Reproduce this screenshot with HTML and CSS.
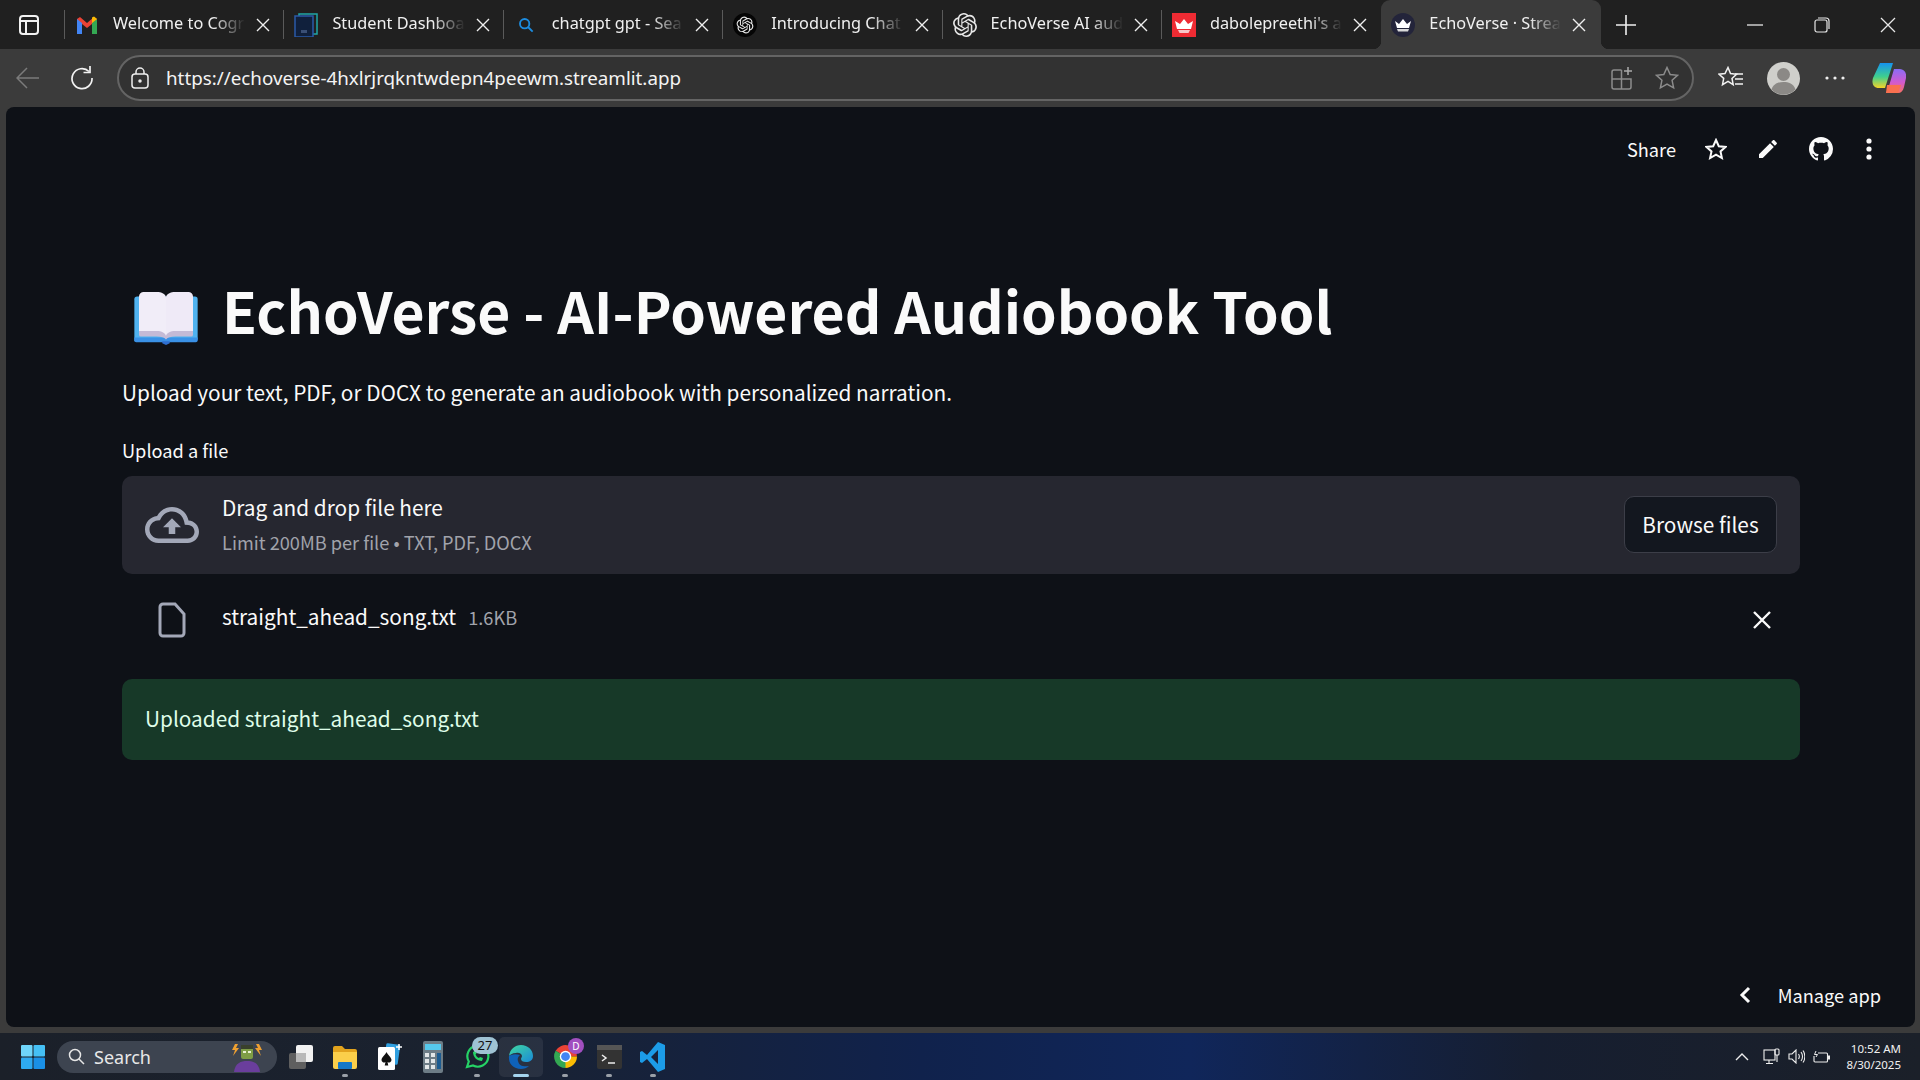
FILE: index.html
```html
<!DOCTYPE html>
<html lang="en">
<head>
    <meta charset="UTF-8">
    <title>EchoVerse · Streamlit</title>
    <link rel="stylesheet" href="styles.css">
</head>
<body>
    <div class="screen">
        <!-- Tabs -->
        <div class="tabstrip">
            <div class="tab-menu">
                <svg width="22" height="24" viewBox="0 0 22 24" fill="none" stroke="#f2f2f2" stroke-width="2"><rect x="2" y="3" width="18" height="18" rx="3"/><path d="M2 8h18M8 8v13"/></svg>
            </div>
            <div class="tab-sep"></div>
            <div class="tab">
                <svg class="favicon" viewBox="0 0 24 24"><path d="M2 21V6l3 -2 7 6 7-6 3 2v15h-5V11l-5 4-5-4v10z" fill="#ea4335"/><path d="M2 21V6l5 4v11z" fill="#4285f4"/><path d="M22 21V6l-5 4v11z" fill="#34a853"/><path d="M17 10V4.500l2-.9 3 2.400v0z" fill="#fbbc04"/></svg>
                <span class="tab-label">Welcome to Cogr</span>
                <svg class="tab-close" viewBox="0 0 14 14"><path d="M1 1l12 12M13 1L1 13"/></svg>
            </div>
            <div class="tab-sep"></div>
            <div class="tab">
                <svg class="favicon" viewBox="0 0 24 24" fill="none"><rect x="5" y="1" width="18" height="20" stroke="#1fa6a6" stroke-width="1.500"/><rect x="1" y="3" width="18" height="21" fill="#10203c" stroke="#2a5aa8" stroke-width="1.500"/><path d="M7 17h6v3H7z" fill="#3a4f75"/></svg>
                <span class="tab-label">Student Dashboa</span>
                <svg class="tab-close" viewBox="0 0 14 14"><path d="M1 1l12 12M13 1L1 13"/></svg>
            </div>
            <div class="tab-sep"></div>
            <div class="tab">
                <svg class="favicon favicon-small" viewBox="0 0 24 24" fill="none" stroke="#1c8ce0" stroke-width="2.800"><circle cx="10" cy="10" r="7"/><path d="M15 15l7 7"/></svg>
                <span class="tab-label">chatgpt gpt - Sea</span>
                <svg class="tab-close" viewBox="0 0 14 14"><path d="M1 1l12 12M13 1L1 13"/></svg>
            </div>
            <div class="tab-sep"></div>
            <div class="tab">
                <svg class="favicon" viewBox="0 0 24 24"><circle cx="12" cy="12" r="12" fill="#050505"/><path transform="translate(3.600 3.600) scale(.7)" fill="#e8e8e8" d="M22.2819 9.8211a5.9847 5.9847 0 0 0-.5157-4.9108 6.0462 6.0462 0 0 0-6.5098-2.9A6.0651 6.0651 0 0 0 4.9807 4.1818a5.9847 5.9847 0 0 0-3.9977 2.9 6.0462 6.0462 0 0 0 .7427 7.0966 5.98 5.98 0 0 0 .511 4.9107 6.051 6.051 0 0 0 6.5146 2.9001A5.9847 5.9847 0 0 0 13.2599 24a6.0557 6.0557 0 0 0 5.7718-4.2058 5.9894 5.9894 0 0 0 3.9977-2.9001 6.0557 6.0557 0 0 0-.7475-7.0729zm-9.022 12.6081a4.4755 4.4755 0 0 1-2.8764-1.0408l.1419-.0804 4.7783-2.7582a.7948.7948 0 0 0 .3927-.6813v-6.7369l2.02 1.1686a.071.071 0 0 1 .038.052v5.5826a4.504 4.504 0 0 1-4.4945 4.4944zm-9.6607-4.1254a4.4708 4.4708 0 0 1-.5346-3.0137l.142.0852 4.783 2.7582a.7712.7712 0 0 0 .7806 0l5.8428-3.3685v2.3324a.0804.0804 0 0 1-.0332.0615L9.74 19.9502a4.4992 4.4992 0 0 1-6.1408-1.6464zM2.3408 7.8956a4.485 4.485 0 0 1 2.3655-1.9728V11.6a.7664.7664 0 0 0 .3879.6765l5.8144 3.3543-2.0201 1.1685a.0757.0757 0 0 1-.071 0l-4.8303-2.7865A4.504 4.504 0 0 1 2.3408 7.872zm16.5963 3.8558L13.1038 8.364 15.1192 7.2a.0757.0757 0 0 1 .071 0l4.8303 2.7913a4.4944 4.4944 0 0 1-.6765 8.1042v-5.6772a.79.79 0 0 0-.407-.667zm2.0107-3.0231l-.142-.0852-4.7735-2.7818a.7759.7759 0 0 0-.7854 0L9.409 9.2297V6.8974a.0662.0662 0 0 1 .0284-.0615l4.8303-2.7866a4.4992 4.4992 0 0 1 6.6802 4.66zM8.3065 12.863l-2.02-1.1638a.0804.0804 0 0 1-.038-.0567V6.0742a4.4992 4.4992 0 0 1 7.3757-3.4537l-.142.0805L8.704 5.459a.7948.7948 0 0 0-.3927.6813zm1.0976-2.3654l2.602-1.4998 2.6069 1.4998v2.9994l-2.5974 1.4997-2.6067-1.4997Z"/></svg>
                <span class="tab-label">Introducing Chat</span>
                <svg class="tab-close" viewBox="0 0 14 14"><path d="M1 1l12 12M13 1L1 13"/></svg>
            </div>
            <div class="tab-sep"></div>
            <div class="tab">
                <svg class="favicon" viewBox="0 0 24 24"><path fill="#e8e8e8" d="M22.2819 9.8211a5.9847 5.9847 0 0 0-.5157-4.9108 6.0462 6.0462 0 0 0-6.5098-2.9A6.0651 6.0651 0 0 0 4.9807 4.1818a5.9847 5.9847 0 0 0-3.9977 2.9 6.0462 6.0462 0 0 0 .7427 7.0966 5.98 5.98 0 0 0 .511 4.9107 6.051 6.051 0 0 0 6.5146 2.9001A5.9847 5.9847 0 0 0 13.2599 24a6.0557 6.0557 0 0 0 5.7718-4.2058 5.9894 5.9894 0 0 0 3.9977-2.9001 6.0557 6.0557 0 0 0-.7475-7.0729zm-9.022 12.6081a4.4755 4.4755 0 0 1-2.8764-1.0408l.1419-.0804 4.7783-2.7582a.7948.7948 0 0 0 .3927-.6813v-6.7369l2.02 1.1686a.071.071 0 0 1 .038.052v5.5826a4.504 4.504 0 0 1-4.4945 4.4944zm-9.6607-4.1254a4.4708 4.4708 0 0 1-.5346-3.0137l.142.0852 4.783 2.7582a.7712.7712 0 0 0 .7806 0l5.8428-3.3685v2.3324a.0804.0804 0 0 1-.0332.0615L9.74 19.9502a4.4992 4.4992 0 0 1-6.1408-1.6464zM2.3408 7.8956a4.485 4.485 0 0 1 2.3655-1.9728V11.6a.7664.7664 0 0 0 .3879.6765l5.8144 3.3543-2.0201 1.1685a.0757.0757 0 0 1-.071 0l-4.8303-2.7865A4.504 4.504 0 0 1 2.3408 7.872zm16.5963 3.8558L13.1038 8.364 15.1192 7.2a.0757.0757 0 0 1 .071 0l4.8303 2.7913a4.4944 4.4944 0 0 1-.6765 8.1042v-5.6772a.79.79 0 0 0-.407-.667zm2.0107-3.0231l-.142-.0852-4.7735-2.7818a.7759.7759 0 0 0-.7854 0L9.409 9.2297V6.8974a.0662.0662 0 0 1 .0284-.0615l4.8303-2.7866a4.4992 4.4992 0 0 1 6.6802 4.66zM8.3065 12.863l-2.02-1.1638a.0804.0804 0 0 1-.038-.0567V6.0742a4.4992 4.4992 0 0 1 7.3757-3.4537l-.142.0805L8.704 5.459a.7948.7948 0 0 0-.3927.6813zm1.0976-2.3654l2.602-1.4998 2.6069 1.4998v2.9994l-2.5974 1.4997-2.6067-1.4997Z"/></svg>
                <span class="tab-label">EchoVerse AI aud</span>
                <svg class="tab-close" viewBox="0 0 14 14"><path d="M1 1l12 12M13 1L1 13"/></svg>
            </div>
            <div class="tab-sep"></div>
            <div class="tab">
                <svg class="favicon" viewBox="0 0 24 24"><rect width="24" height="24" fill="#ee2b33"/><path d="M3 8l5 3 4-5 4 5 5-3-2 8H5z" fill="#fff"/><path d="M6 17h12l-1.500 3h-9z" fill="#f8c6c8"/></svg>
                <span class="tab-label">dabolepreethi's a</span>
                <svg class="tab-close" viewBox="0 0 14 14"><path d="M1 1l12 12M13 1L1 13"/></svg>
            </div>
            <div class="tab tab-active">
                <svg class="favicon" viewBox="0 0 24 24"><circle cx="12" cy="12" r="12" fill="#23243a"/><path d="M4 8l4 3 4-5 4 5 4-3-2 7H6z" fill="#fff"/><path d="M6 16h12l-1 2.500H7z" fill="#d9d9d9"/></svg>
                <span class="tab-label">EchoVerse · Strea</span>
                <svg class="tab-close" viewBox="0 0 14 14"><path d="M1 1l12 12M13 1L1 13"/></svg>
            </div>
            <svg class="new-tab" width="20" height="20" viewBox="0 0 20 20" stroke="#f0f0f0" stroke-width="1.600"><path d="M10 0v20M0 10h20"/></svg>
            <div class="window-buttons">
                <div class="window-button"><svg width="16" height="16" viewBox="0 0 16 16" stroke="#e8e8e8" stroke-width="1.300"><path d="M0 8h16"/></svg></div>
                <div class="window-button"><svg width="16" height="16" viewBox="0 0 16 16" fill="none" stroke="#e8e8e8" stroke-width="1.200"><rect x="1" y="3" width="12" height="12" rx="2"/><path d="M4 1h8a3 3 0 0 1 3 3v8"/></svg></div>
                <div class="window-button"><svg width="16" height="16" viewBox="0 0 16 16" stroke="#e8e8e8" stroke-width="1.300"><path d="M1 1l14 14M15 1L1 15"/></svg></div>
            </div>
        </div>

        <!-- Address bar -->
        <div class="toolbar">
            <div class="tool-button">
                <svg width="24" height="22" viewBox="0 0 24 22" fill="none" stroke="#7b7b7b" stroke-width="1.500"><path d="M23 11H1M11 1L1 11l10 10"/></svg>
            </div>
            <div class="tool-button">
                <svg width="24" height="24" viewBox="0 0 24 24" fill="none" stroke="#f2f2f2" stroke-width="1.700"><path d="M19 5.500A10 10 0 1 0 22 12"/><path d="M20 0v6.500h-6.500"/></svg>
            </div>
            <div class="address">
                <svg class="lock" width="18" height="22" viewBox="0 0 18 22" fill="none" stroke="#eee" stroke-width="1.500"><rect x="1" y="7" width="16" height="14" rx="3"/><path d="M5 7V5a4 4 0 0 1 8 0v2"/><circle cx="9" cy="14" r="1" fill="#eee"/></svg>
                <span class="url">https://echoverse-4hxlrjrqkntwdepn4peewm.streamlit.app</span>
                <svg class="address-icon" width="22" height="24" viewBox="0 0 22 24" fill="none" stroke="#8c8c8c" stroke-width="1.500"><path d="M10.500 4H3a2 2 0 0 0-2 2v15a2 2 0 0 0 2 2h15a2 2 0 0 0 2-2v-8H1M10.500 4v19"/><path d="M17 1v8M13 5h8" stroke="#aaa"/></svg>
                <svg class="address-icon" width="24" height="24" viewBox="0 0 24 24" fill="none" stroke="#8c8c8c" stroke-width="1.500"><path d="M12 1.500l3.200 7 7.300.8-5.400 5 1.500 7.600-6.600-3.800-6.600 3.800L6.900 14.300l-5.400-5 7.300-.8z"/></svg>
            </div>
            <div class="tool-right">
                <div class="tool-cell">
                    <svg width="26" height="24" viewBox="0 0 26 24" fill="none" stroke="#f2f2f2" stroke-width="1.500"><path d="M10 1.500l2.500 6 6 .7-4.500 4.200 1.200 6.300L10 15.400l-5.500 3.300 1.200-6.300L1 8.200l6-.7z"/><path d="M17 8h8M17 13h8M17 18h8"/></svg>
                </div>
                <div class="tool-cell">
                    <svg width="33" height="33" viewBox="0 0 33 33"><circle cx="16.500" cy="16.500" r="16.500" fill="#cfcfcb"/><circle cx="16.500" cy="12.500" r="6.500" fill="#8b8986"/><path d="M4.500 27.500c2-6 7-7.500 12-7.500s10 1.500 12 7.500a16.500 16.500 0 0 1-24 0z" fill="#8b8986"/></svg>
                </div>
                <div class="tool-cell">
                    <svg width="20" height="4" viewBox="0 0 20 4" fill="#eee"><circle cx="2" cy="2" r="1.600"/><circle cx="10" cy="2" r="1.600"/><circle cx="18" cy="2" r="1.600"/></svg>
                </div>
                <div class="tool-cell">
                    <svg width="34" height="32" viewBox="0 0 34 32"><defs><linearGradient id="copA" x1="0" y1="0" x2="0" y2="1"><stop offset="0" stop-color="#1593f0"/><stop offset=".55" stop-color="#3fcf8e"/><stop offset="1" stop-color="#f5d327"/></linearGradient><linearGradient id="copB" x1="0" y1="0" x2="0" y2="1"><stop offset="0" stop-color="#8a6cf5"/><stop offset=".55" stop-color="#d05ad0"/><stop offset="1" stop-color="#f97060"/></linearGradient></defs><path d="M8 1h13l-8 25H7C1 26-.5 21 1 16z" fill="url(#copA)"/><path d="M14 31h12c3 0 5-2 6-6l2-9c1-5-2-9-6-9h-6l-5 17z" fill="url(#copB)"/><path d="M14 31h12l3-8-14 0z" fill="#f9704f"/></svg>
                </div>
            </div>
        </div>

        <!-- Page -->
        <div class="frame">
            <div class="app">
                <div class="app-header">
                    <span class="share">Share</span>
                    <svg class="header-icon" width="22" height="22" viewBox="0 0 22 22" fill="none" stroke="#fafafa" stroke-width="2"><path d="M11 2l2.800 6.200 6.700.7-5 4.500 1.400 6.600L11 16.600 5.100 20l1.400-6.600-5-4.500 6.700-.7z"/></svg>
                    <svg class="header-icon" width="24" height="24" viewBox="0 0 24 24" fill="#fafafa"><path d="M3 17.250V21h3.750L17.810 9.940l-3.750-3.750L3 17.250zM20.710 7.040c.39-.39.39-1.020 0-1.410l-2.340-2.340c-.39-.39-1.020-.39-1.410 0l-1.830 1.830 3.750 3.750 1.830-1.830z"/></svg>
                    <svg class="header-icon" width="24" height="24" viewBox="0 0 16 16" fill="#fafafa"><path d="M8 0C3.580 0 0 3.580 0 8c0 3.540 2.290 6.530 5.470 7.590.4.070.55-.17.55-.38 0-.19-.01-.82-.01-1.490-2.010.37-2.530-.49-2.690-.94-.09-.23-.48-.94-.82-1.130-.28-.15-.68-.52-.01-.53.63-.01 1.080.58 1.230.82.720 1.210 1.870.87 2.330.66.070-.52.280-.87.510-1.070-1.780-.2-3.640-.89-3.640-3.950 0-.87.310-1.590.820-2.150-.08-.2-.36-1.020.080-2.120 0 0 .670-.21 2.200.82.640-.18 1.320-.27 2-.27.680 0 1.360.090 2 .27 1.530-1.040 2.200-.82 2.200-.82.440 1.100.160 1.920.080 2.120.510.560.820 1.270.820 2.150 0 3.070-1.870 3.750-3.650 3.950.290.250.540.730.540 1.480 0 1.070-.01 1.930-.01 2.200 0 .210.150.460.550.380A8.013 8.013 0 0016 8c0-4.420-3.580-8-8-8z"/></svg>
                    <svg class="header-dots" width="6" height="22" viewBox="0 0 6 22" fill="#fafafa"><circle cx="3" cy="3" r="2.600"/><circle cx="3" cy="11" r="2.600"/><circle cx="3" cy="19" r="2.600"/></svg>
                </div>

                <main class="content">
                    <h1 class="title">
                        <svg class="book" width="64" height="54" viewBox="0 0 68 58"><path d="M0 9a3 3 0 0 1 3-3h62a3 3 0 0 1 3 3v42a3 3 0 0 1-3 3H0z" fill="#4fb2ef"/><path d="M0 50h68v3a2 2 0 0 1-2 2H2a2 2 0 0 1-2-2z" fill="#3a91e6"/><path d="M30 54h8v2l-4 2-4-2z" fill="#2f6fd0"/><path d="M5 6a5 5 0 0 1 5-5h14c5 0 10 2 10 6v43c0-3-5-4-10-4H5z" fill="#f1edf8"/><path d="M63 6a5 5 0 0 0-5-5H44c-5 0-10 2-10 6v43c0-3 5-4 10-4h19z" fill="#efeaf7"/><path d="M5 43h19c5 0 10 2 10 6 0-4 5-6 10-6h19v4a2 2 0 0 1-2 2H44c-5 0-8 1-10 3-2-2-5-3-10-3H7a2 2 0 0 1-2-2z" fill="#c4bad6"/></svg>
                        <span>EchoVerse - AI-Powered Audiobook Tool</span>
                    </h1>
                    <p class="intro">Upload your text, PDF, or DOCX to generate an audiobook with personalized narration.</p>
                    <label class="upload-label">Upload a file</label>

                    <div class="dropzone">
                        <svg class="cloud" width="54" height="54" viewBox="0 0 24 24" fill="#a3a8b8"><path d="M19.350 10.040C18.670 6.590 15.640 4 12 4 9.110 4 6.600 5.640 5.350 8.040 2.340 8.360 0 10.910 0 14c0 3.310 2.690 6 6 6h13c2.760 0 5-2.240 5-5 0-2.640-2.050-4.780-4.650-4.960zM19 18H6c-2.210 0-4-1.790-4-4 0-2.050 1.530-3.760 3.560-3.970l1.070-.11.5-.95C8.080 7.140 9.940 6 12 6c2.620 0 4.880 1.860 5.390 4.430l.3 1.500 1.530.11c1.560.1 2.780 1.410 2.780 2.960 0 1.650-1.350 3-3 3zM8 13h2.550v3h2.900v-3H16l-4-4z"/></svg>
                        <div class="drop-text">
                            <div class="drop-title">Drag and drop file here</div>
                            <div class="drop-limit">Limit 200MB per file • TXT, PDF, DOCX</div>
                        </div>
                        <button class="browse" type="button">Browse files</button>
                    </div>

                    <div class="file-row">
                        <svg class="file-icon" width="30" height="36" viewBox="0 0 30 36" fill="none" stroke="#a3a8b8" stroke-width="3"><path d="M3 5a3 3 0 0 1 3-3h12l9 10v19a3 3 0 0 1-3 3H6a3 3 0 0 1-3-3z"/></svg>
                        <span class="file-name">straight_ahead_song.txt</span>
                        <span class="file-size">1.6KB</span>
                        <svg class="file-remove" width="18" height="18" viewBox="0 0 18 18" stroke="#fafafa" stroke-width="2.400"><path d="M1 1l16 16M17 1L1 17"/></svg>
                    </div>

                    <div class="success">Uploaded straight_ahead_song.txt</div>
                </main>

                <div class="manage">
                    <svg width="12" height="18" viewBox="0 0 12 18" fill="none" stroke="#fafafa" stroke-width="3"><path d="M10 2L3 9l7 7"/></svg>
                    <span>Manage app</span>
                </div>
            </div>
        </div>

        <!-- Taskbar -->
        <div class="taskbar">
            <div class="start">
                <svg width="24" height="24" viewBox="0 0 24 24"><rect width="11.500" height="11.500" rx="1" fill="#6fd5fa"/><rect x="12.500" width="11.500" height="11.500" rx="1" fill="#45c0f5"/><rect y="12.500" width="11.500" height="11.500" rx="1" fill="#2eaaf0"/><rect x="12.500" y="12.500" width="11.500" height="11.500" rx="1" fill="#1a90e6"/></svg>
            </div>
            <div class="search">
                <svg width="17" height="17" viewBox="0 0 17 17" fill="none" stroke="#e6e6e6" stroke-width="1.500"><circle cx="7" cy="7" r="5.500"/><path d="M11 11l5 5"/></svg>
                <span>Search</span>
                <svg class="mascot" width="38" height="30" viewBox="0 0 38 30"><path d="M7 2l-3 6 3 0-2 6 6-8-3 0 2-4zM31 2l3 6-3 0 2 6-6-8 3 0-2-4z" fill="#f0a030"/><rect x="13" y="3" width="12" height="14" rx="2" fill="#7e9d45"/><rect x="13" y="3" width="12" height="4" fill="#39402c"/><rect x="15" y="9" width="3" height="2" fill="#e8f0d0"/><rect x="20" y="9" width="3" height="2" fill="#e8f0d0"/><path d="M6 30c1-9 7-11 13-11s12 2 13 11z" fill="#6a3e9c"/></svg>
            </div>
            <div class="task-icons">
                <div class="task-icon">
                    <svg width="26" height="26" viewBox="0 0 26 26"><rect x="8" y="1" width="17" height="17" rx="2" fill="#f2f2f2"/><rect x="1" y="9" width="17" height="16" rx="2" fill="#5f5f5f"/><rect x="8" y="9" width="10" height="9" fill="#b9b9b9"/></svg>
                </div>
                <div class="task-icon running">
                    <svg width="26" height="26" viewBox="0 0 26 26"><path d="M1 4a2 2 0 0 1 2-2h7l3 3h10a2 2 0 0 1 2 2v3H1z" fill="#e2a31d"/><path d="M1 8h24v15a2 2 0 0 1-2 2H3a2 2 0 0 1-2-2z" fill="#fbcf4a"/><rect x="6" y="18" width="14" height="7" rx="1" fill="#1478c8"/></svg>
                </div>
                <div class="task-icon">
                    <svg width="26" height="28" viewBox="0 0 26 28"><rect x="9" y="1" width="14" height="20" rx="1.500" fill="#2f9fe0" transform="rotate(8 16 11)"/><rect x="2" y="4" width="17" height="23" rx="1.500" fill="#fff"/><path d="M10.500 9c1 3 5 5 5 8a2.500 2.500 0 0 1-4 2l.8 3.500H8.700l.8-3.500a2.500 2.500 0 0 1-4-2c0-3 4-5 5-8z" fill="#111"/><path d="M23 1v6M20 4h6" stroke="#fff" stroke-width="1.500"/></svg>
                </div>
                <div class="task-icon">
                    <svg width="20" height="32" viewBox="0 0 20 32"><rect width="20" height="32" rx="2" fill="#6d7c86"/><rect x="2" y="3" width="16" height="6" fill="#56c8ec"/><path d="M2 12h4v4H2zM8 12h4v4H8zM2 18h4v4H2zM8 18h4v4H8zM2 24h4v4H2zM8 24h4v4H8z" fill="#e2e6e8"/><rect x="14" y="12" width="4" height="16" fill="#1c5b90"/></svg>
                </div>
                <div class="task-icon running">
                    <svg width="26" height="26" viewBox="0 0 26 26" fill="none"><path d="M3 23l1.800-5.500A10.500 10.500 0 1 1 9 21.500z" stroke="#25d366" stroke-width="2.200"/><path d="M9 8c0 5 4 9 9 9l1-3-3-1-1 1c-1.500-.5-3-2-3.500-3.500l1-1-1-3z" fill="#25d366"/></svg>
                    <span class="badge badge-count">27</span>
                </div>
                <div class="task-icon active">
                    <svg width="26" height="26" viewBox="0 0 26 26"><defs><linearGradient id="edgeA" x1="0" y1="0" x2="1" y2="1"><stop offset="0" stop-color="#40d8a0"/><stop offset="1" stop-color="#1a8ad8"/></linearGradient></defs><path d="M1 12C2 5 7 1 13 1c7 0 12 5 12 11 0 4-3 6-7 6-3 0-5-1-5-3 0-1 1-2 1-3 0-2-3-4-6-3-4 0-6 2-7 3z" fill="url(#edgeA)"/><path d="M1 12c-1 8 5 13 12 13 3 0 6-1 8-3-5 1-10 0-11-5-1-3 1-5 2-6-5-2-10 0-11 1z" fill="#0f62b8"/></svg>
                </div>
                <div class="task-icon running">
                    <svg width="25" height="25" viewBox="0 0 24 24"><path d="M12 12L2.500 6.500A11 11 0 0 1 23 12z" fill="#ea4335"/><path d="M12 12l5.500 0L12 23A11 11 0 0 1 2.500 6.500z" fill="#34a853"/><path d="M12 12h11a11 11 0 0 1-11 11z" fill="#fbbc04"/><circle cx="12" cy="12" r="5.500" fill="#fff"/><circle cx="12" cy="12" r="4.200" fill="#4285f4"/></svg>
                    <span class="badge badge-letter">D</span>
                </div>
                <div class="task-icon running">
                    <svg width="25" height="24" viewBox="0 0 25 24"><rect width="25" height="24" rx="2" fill="#333"/><rect width="25" height="5" fill="#555"/><path d="M5 10l4 3-4 3" fill="none" stroke="#eee" stroke-width="1.500"/><path d="M11 18h7" stroke="#eee" stroke-width="1.500"/></svg>
                </div>
                <div class="task-icon running">
                    <svg width="26" height="32" viewBox="0 0 26 32"><path d="M18 1l7 3v24l-7 3-11-13-5 4-2-1V11l2-1 5 4zM18 9l-7 7 7 7z" fill="#1c9ce8"/></svg>
                </div>
            </div>
            <div class="tray">
                <svg width="14" height="8" viewBox="0 0 14 8" fill="none" stroke="#eee" stroke-width="1.400"><path d="M1 7l6-6 6 6"/></svg>
                <svg class="tray-net" width="17" height="17" viewBox="0 0 17 17" fill="none" stroke="#eee" stroke-width="1.100"><rect x="1" y="2" width="11" height="10"/><path d="M6 12v3M3 15.500h7"/><rect x="12" y="1" width="4" height="6" rx="1"/><path d="M14 7v7"/></svg>
                <svg class="tray-sound" width="17" height="15" viewBox="0 0 17 15" fill="none" stroke="#eee" stroke-width="1.100"><path d="M1 5v5h3l4 4V1L4 5z"/><path d="M10.500 5c1 1.500 1 3.500 0 5M13 3c2 2.500 2 6.500 0 9M15 1.500c2.500 3.500 2.500 8.500 0 12"/></svg>
                <svg class="tray-battery" width="17" height="12" viewBox="0 0 17 12" fill="none" stroke="#eee" stroke-width="1.100"><path d="M5 2h8.500a1 1 0 0 1 1 1v7a1 1 0 0 1-1 1H2a1 1 0 0 1-1-1V5"/><path d="M15 5h1.500v3H15" fill="#eee"/><path d="M3 0L1.500 3.500h3L3 6" stroke-width="1"/></svg>
                <div class="clock">
                    <span>10:52 AM</span>
                    <span>8/30/2025</span>
                </div>
            </div>
        </div>
    </div>
</body>
</html>
```

FILE: styles.css
```css
* {
    box-sizing: border-box;
}

html, body {
    margin: 0;
    height: 100%;
    overflow: hidden;
}

body {
    font-family: "Noto Sans", "Open Sans", sans-serif;
    background-color: #202020;
    color: #fafafa;
}

.screen {
    width: 1920px;
    height: 1080px;
    display: flex;
    flex-direction: column;
}

/* Tabs */
.tabstrip {
    height: 49px;
    flex: none;
    display: flex;
    align-items: center;
    background-color: #202020;
}

.tab-menu {
    width: 57px;
    flex: none;
    display: flex;
    justify-content: center;
}

.tab-menu svg {
    display: block;
}

.tab-sep {
    width: 1px;
    height: 29px;
    flex: none;
    background-color: #5a5a5a;
}

.tab-menu + .tab-sep {
    margin-left: 7px;
}

.tab {
    width: 218.4px;
    height: 49px;
    flex: none;
    display: flex;
    align-items: center;
    gap: 14px;
    padding: 0 13px 0 10px;
    font-size: 16.3px;
    color: #f0f0f0;
}

.favicon {
    width: 24px;
    height: 24px;
    flex: none;
}

.favicon-small {
    padding: 4px;
}

.tab-label {
    flex: 1;
    min-width: 0;
    white-space: nowrap;
    line-height: 22px;
    margin-top: -4px;
    -webkit-mask-image: linear-gradient(to right, #000 74%, transparent 98%);
    mask-image: linear-gradient(to right, #000 74%, transparent 98%);
}

.tab-close {
    width: 14px;
    height: 14px;
    flex: none;
    margin-left: -6px;
    fill: none;
    stroke: #f0f0f0;
    stroke-width: 1.4;
}

.tab-active {
    width: 220px;
    margin-left: 1px;
    padding-right: 15px;
    position: relative;
    background-color: #3b3b3b;
    border-radius: 9px 9px 0 0;
}

.tab-active::before,
.tab-active::after {
    content: "";
    position: absolute;
    bottom: 0;
    width: 8px;
    height: 8px;
}

.tab-active::before {
    left: -8px;
    background: radial-gradient(circle at 0 0, transparent 8px, #3b3b3b 8.5px);
}

.tab-active::after {
    right: -8px;
    background: radial-gradient(circle at 100% 0, transparent 8px, #3b3b3b 8.5px);
}

.new-tab {
    margin-left: 15px;
    flex: none;
}

.window-buttons {
    margin-left: auto;
    display: flex;
}

.window-button {
    width: 67px;
    height: 49px;
    display: flex;
    align-items: center;
    justify-content: center;
}

.window-button:last-child {
    width: 65px;
}

/* Address bar */
.toolbar {
    height: 58px;
    flex: none;
    display: flex;
    align-items: center;
    background-color: #3b3b3b;
}

.tool-button {
    width: 55px;
    display: flex;
    justify-content: center;
}

.tool-button + .tool-button {
    width: 54px;
    margin-right: 1px;
}

.address {
    flex: 1;
    height: 46px;
    margin-left: 7px;
    display: flex;
    align-items: center;
    padding: 0 13px 0 12px;
    background-color: #323232;
    border: 2px solid #646464;
    border-radius: 23px;
}

.lock {
    flex: none;
}

.url {
    margin-left: 17px;
    font-size: 18.8px;
    line-height: 24px;
    margin-top: -1px;
    color: #f4f4f4;
    flex: 1;
    white-space: nowrap;
}

.address-icon {
    flex: none;
    margin-left: 22px;
}

.tool-right {
    display: flex;
    margin-left: 11px;
    padding-right: 5px;
}

.tool-cell {
    width: 52px;
    display: flex;
    justify-content: center;
    align-items: center;
}

.tool-cell:last-child {
    width: 54px;
    padding-left: 2px;
}

/* Page */
.frame {
    flex: 1;
    min-height: 0;
    padding: 0 5px 6px 6px;
    background-color: #3b3b3b;
}

.app {
    height: 100%;
    display: flex;
    flex-direction: column;
    background-color: #0e1117;
    border-radius: 8px;
    font-family: "Noto Sans CJK JP", "Noto Sans", sans-serif;
}

.app-header {
    height: 83px;
    flex: none;
    display: flex;
    align-items: center;
    justify-content: flex-end;
    padding-right: 43px;
}

.share {
    font-size: 18.2px;
    margin-right: 29px;
}

.header-icon {
    margin-right: 29px;
}

.header-icon:nth-of-type(3) {
    margin-right: 33px;
}

.content {
    padding: 0 115px 0 116px;
}

.title {
    margin: 79px 0 0;
    display: flex;
    align-items: center;
    gap: 24px;
    font-size: 57px;
    font-weight: 700;
    line-height: 80px;
    padding-left: 12px;
}

.book {
    flex: none;
    margin-top: 18px;
}

.intro {
    margin: 25px 0 0;
    font-size: 20.8px;
    line-height: 36px;
}

.upload-label {
    display: block;
    margin-top: 25px;
    font-size: 18.2px;
    line-height: 30px;
}

.dropzone {
    height: 98px;
    margin-top: 11px;
    display: flex;
    align-items: center;
    padding: 0 23px;
    background-color: #262730;
    border-radius: 10px;
}

.cloud {
    flex: none;
}

.drop-text {
    margin: -2px 0 0 23px;
    flex: 1;
}

.drop-title {
    font-size: 20.8px;
    line-height: 34px;
}

.drop-limit {
    margin-top: 2px;
    font-size: 18.2px;
    line-height: 32px;
    color: #a1a3ab;
}

.browse {
    width: 153px;
    height: 57px;
    margin-top: -1px;
    padding: 0 0 2px;
    background-color: #13171f;
    border: 1px solid #3c3e48;
    border-radius: 10px;
    color: #fafafa;
    font-family: inherit;
    font-size: 20.8px;
}

.file-row {
    height: 105px;
    display: flex;
    align-items: center;
    padding: 0 29px 14px 35px;
}

.file-icon {
    flex: none;
}

.file-name {
    margin-left: 35px;
    font-size: 20.8px;
    line-height: 30px;
    margin-bottom: 7px;
}

.file-size {
    margin-left: 12px;
    font-size: 18.2px;
    line-height: 30px;
    margin-bottom: 5px;
    color: #a1a3ab;
}

.file-remove {
    margin-left: auto;
}

.success {
    height: 81px;
    display: flex;
    align-items: center;
    padding: 0 23px 4px;
    background-color: #173928;
    border-radius: 10px;
    font-size: 20.8px;
    color: #dffde9;
}

.manage {
    margin-top: auto;
    height: 60px;
    display: flex;
    align-items: center;
    justify-content: flex-end;
    gap: 27px;
    padding: 0 34px 5px 0;
    font-size: 18.2px;
}

/* Taskbar */
.taskbar {
    height: 47px;
    flex: none;
    display: flex;
    align-items: center;
    background: linear-gradient(to right, #1b2029 0%, #1a2230 25%, #10224c 48%, #10265a 62%, #161e30 80%, #1b2029 100%);
}

.start {
    width: 57px;
    display: flex;
    justify-content: center;
    padding-left: 9px;
}

.search {
    width: 220px;
    height: 32px;
    display: flex;
    align-items: center;
    gap: 9px;
    padding: 0 0 0 11px;
    background-color: #3d4450;
    border-radius: 16px;
    font-size: 18px;
    color: #e8e8e8;
}

.mascot {
    margin-left: auto;
    margin-right: 11px;
}

.task-icons {
    display: flex;
    margin-left: 2px;
}

.task-icon {
    width: 44px;
    height: 40px;
    display: flex;
    align-items: center;
    justify-content: center;
    position: relative;
    border-radius: 5px;
}

.task-icon.active {
    background-color: rgba(255, 255, 255, 0.07);
}

.task-icon.running::after,
.task-icon.active::after {
    content: "";
    position: absolute;
    left: 50%;
    bottom: 0;
    width: 6px;
    height: 3px;
    margin-left: -3px;
    border-radius: 2px;
    background-color: #9aa0a8;
}

.task-icon.active::after {
    width: 16px;
    margin-left: -8px;
    background-color: #a5d4ee;
}

.badge {
    position: absolute;
    border-radius: 10px;
    text-align: center;
}

.badge-count {
    top: 0;
    right: 1px;
    width: 26px;
    height: 17px;
    background-color: #9fc3d4;
    color: #111;
    font-size: 13px;
    line-height: 17px;
}

.badge-letter {
    top: 1px;
    right: 3px;
    width: 16px;
    height: 16px;
    background-color: #a14fc0;
    color: #fff;
    font-size: 10px;
    line-height: 16px;
}

.tray {
    margin-left: auto;
    display: flex;
    align-items: center;
    padding-right: 19px;
}

.tray-net {
    margin-left: 14px;
}

.tray-sound {
    margin-left: 8px;
}

.tray-battery {
    margin-left: 8px;
}

.clock {
    margin-left: 16px;
    display: flex;
    flex-direction: column;
    align-items: flex-end;
    font-size: 11.5px;
    line-height: 16px;
    color: #f0f0f0;
}
```
